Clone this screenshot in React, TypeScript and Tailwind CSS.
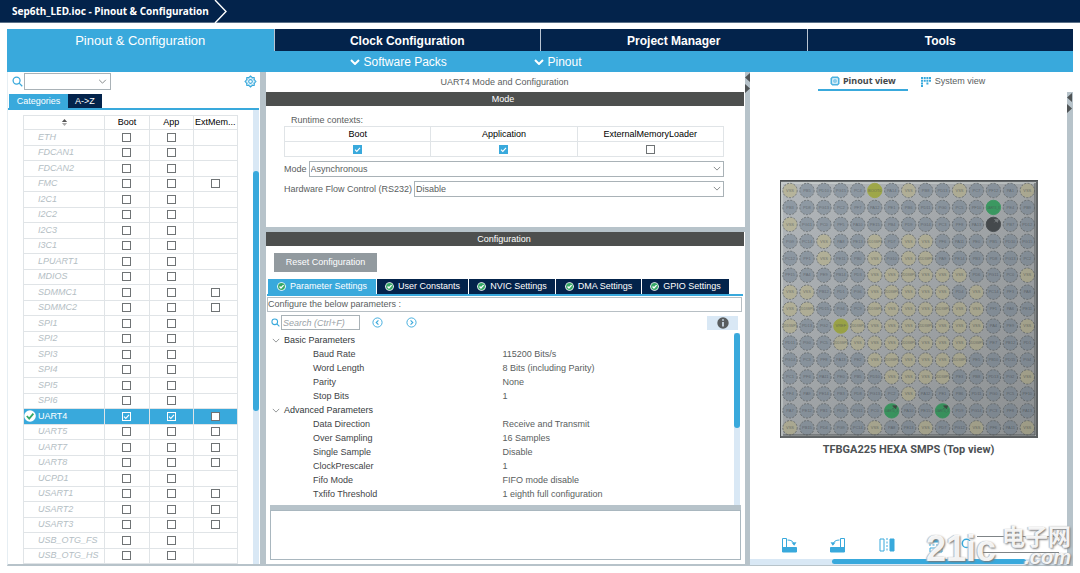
import { useState } from "react";
import clsx from "clsx";

type Row = { name: string; ext?: boolean; active?: boolean };

const PERIPHERALS: Row[] = [
  { name: "ETH" },
  { name: "FDCAN1" },
  { name: "FDCAN2" },
  { name: "FMC", ext: true },
  { name: "I2C1" },
  { name: "I2C2" },
  { name: "I2C3" },
  { name: "I3C1" },
  { name: "LPUART1" },
  { name: "MDIOS" },
  { name: "SDMMC1", ext: true },
  { name: "SDMMC2", ext: true },
  { name: "SPI1" },
  { name: "SPI2" },
  { name: "SPI3" },
  { name: "SPI4" },
  { name: "SPI5" },
  { name: "SPI6" },
  { name: "UART4", ext: true, active: true },
  { name: "UART5", ext: true },
  { name: "UART7", ext: true },
  { name: "UART8", ext: true },
  { name: "UCPD1" },
  { name: "USART1", ext: true },
  { name: "USART2", ext: true },
  { name: "USART3", ext: true },
  { name: "USB_OTG_FS" },
  { name: "USB_OTG_HS" },
];

const PARAMS = [
  {
    title: "Basic Parameters",
    items: [
      ["Baud Rate", "115200 Bits/s"],
      ["Word Length", "8 Bits (including Parity)"],
      ["Parity", "None"],
      ["Stop Bits", "1"],
    ],
  },
  {
    title: "Advanced Parameters",
    items: [
      ["Data Direction", "Receive and Transmit"],
      ["Over Sampling", "16 Samples"],
      ["Single Sample", "Disable"],
      ["ClockPrescaler", "1"],
      ["Fifo Mode", "FIFO mode disable"],
      ["Txfifo Threshold", "1 eighth full configuration"],
    ],
  },
];

const SETTINGS_TABS = [
  { label: "Parameter Settings", width: "w-[108px]" },
  { label: "User Constants", width: "w-[91px]" },
  { label: "NVIC Settings", width: "w-[86px]" },
  { label: "DMA Settings", width: "w-[85px]" },
  { label: "GPIO Settings", width: "w-[87px]" },
];

// g = free pin, y = power, L = fixed, G = assigned, K = reset
const BALLS = [
  "yggggLgyggygggy",
  "ggggggggggggGgg",
  "ygggggggggggKgg",
  "ggyggygyygggggg",
  "ggyggygyygggggg",
  "gggggyyyyyygggy",
  "yygggyyyyygyggg",
  "yygggyyyyyyyggg",
  "yggLyyyyyyyyggy",
  "gggyyyyyyyyyggg",
  "gggggyyyyyygggg",
  "ggggggyyyyggggy",
  "gggggggyggggggg",
  "ggggggGggGggggg",
  "yggggyggyggyggy",
];

const BALL_FILL: Record<string, string> = {
  g: "#909ba5",
  y: "#b7b59c",
  L: "#a3ac4a",
  G: "#3fa368",
  K: "#4a4f52",
};

function ballLabel(kind: string, r: number, c: number) {
  if (kind === "y") return (r + c) % 4 === 0 && r > 2 && r < 12 ? "VDDSMPS" : "VSS";
  if (kind === "L") return r === 0 ? "BOOT0" : "VREF";
  if (kind === "G") return "UART4_X";
  if (kind === "K") return "";
  return `P${"EBDGCFA"[(r + c) % 7]}${(r * 3 + c * 5) % 16}`;
}

function Chip() {
  return (
    <svg viewBox="0 0 258 258" className="w-[258px]" role="img" aria-label="TFBGA225 package">
      <defs>
        <linearGradient id="body" x1="0" y1="0" x2="1" y2="1">
          <stop offset="0" stopColor="#b3b8bc" />
          <stop offset="1" stopColor="#a4a8aa" />
        </linearGradient>
        <linearGradient id="shade" x1="0" y1="0" x2="1" y2="1">
          <stop offset="0" stopColor="#000" stopOpacity="0" />
          <stop offset="1" stopColor="#000" stopOpacity="0.15" />
        </linearGradient>
      </defs>
      <rect width="258" height="258" fill="#6a6e70" />
      <rect x="1" y="2" width="255" height="254" fill="#c5caca" />
      <rect x="3" y="4" width="252" height="251" fill="url(#body)" />
      {BALLS.map((row, r) =>
        row.split("").map((kind, c) => {
          const x = 10 + c * 16.95;
          const y = 10.5 + r * 16.95;
          return (
            <g key={`${r}-${c}`}>
              <circle
                cx={x}
                cy={y}
                r="7.2"
                fill={BALL_FILL[kind]}
                stroke={kind === "g" || kind === "y" ? "#6b7073" : BALL_FILL[kind]}
                strokeWidth="0.9"
                strokeDasharray={kind === "g" || kind === "y" ? "2 1.4" : undefined}
              />
              <text
                x={x}
                y={y + 1.2}
                textAnchor="middle"
                fontSize={ballLabel(kind, r, c).length > 5 ? "3" : "4"}
                fill="#50565b"
                opacity="0.65"
                fontFamily="Liberation Sans, sans-serif"
              >
                {ballLabel(kind, r, c)}
              </text>
              {(kind === "K" || (kind === "G" && r > 2)) && (
                <path
                  d={`M${x + 1} ${y - 2}l1.5 -1.5m-1.5 -1.5l3 3l1 -3z`}
                  fill={kind === "K" ? "#808588" : "#46504b"}
                  stroke={kind === "K" ? "#808588" : "#46504b"}
                  strokeWidth="0.8"
                />
              )}
            </g>
          );
        })
      )}
      <rect width="258" height="258" fill="url(#shade)" />
      <path d="M0 258V0H258" fill="none" stroke="#4d5153" strokeWidth="2" />
      <path d="M255 3V255H3" fill="none" stroke="#55595b" strokeWidth="1" />
    </svg>
  );
}

function Tick({ label, on = false, inverse = false }: { label: string; on?: boolean; inverse?: boolean }) {
  const [checked, setChecked] = useState(on);
  return (
    <span className="relative mx-auto block size-[9px]">
      <input
        type="checkbox"
        aria-label={label}
        checked={checked}
        onChange={(e) => setChecked(e.target.checked)}
        className={clsx(
          "block size-[9px] appearance-none border",
          checked && inverse && "border-white bg-[#39a9dc]",
          checked && !inverse && "border-[#39a9dc] bg-[#39a9dc]",
          !checked && "border-[#6f7375] bg-white"
        )}
      />
      {checked && (
        <svg viewBox="0 0 9 9" className="pointer-events-none absolute inset-0 size-[9px]">
          <path d="M2 4.6 3.8 6.4 7 2.8" fill="none" stroke="#fff" strokeWidth="1.1" />
        </svg>
      )}
    </span>
  );
}

function Chevron({ className }: { className: string }) {
  return (
    <svg viewBox="0 0 10 6" className={className} fill="none" stroke="currentColor">
      <path d="M1 1 5 5 9 1" />
    </svg>
  );
}

function Magnifier({ className }: { className: string }) {
  return (
    <svg viewBox="0 0 12 12" className={className} fill="none" stroke="#39a9dc" strokeWidth="1.4">
      <circle cx="5" cy="5" r="3.8" />
      <path d="m7.8 7.8 3.4 3.4" />
    </svg>
  );
}

function RowCheck() {
  return (
    <svg viewBox="0 0 12 12" className="-my-[2px] size-[12px]">
      <circle cx="6" cy="6" r="5.8" fill="#fff" />
      <path d="M2.8 6 5.2 8.6 9.4 3.6" fill="none" stroke="#35a866" strokeWidth="1.8" />
    </svg>
  );
}

function StatusDot() {
  return (
    <svg viewBox="0 0 12 12" className="size-[9px] shrink-0">
      <circle cx="6" cy="6" r="5.8" fill="#fff" />
      <circle cx="6" cy="6" r="4.6" fill="#35a866" />
      <path d="M3.4 6 5.3 8 8.8 4.2" fill="none" stroke="#fff" strokeWidth="1.8" />
    </svg>
  );
}

function SplitArrows() {
  return (
    <svg viewBox="0 0 5 22" className="h-[22px] w-[5px] shrink-0" fill="#505456">
      <path d="M5 1v9L0 5.5zM0 12v9l5-4.5z" />
    </svg>
  );
}

function TopTabs() {
  return (
    <nav className="grid grid-cols-4 bg-[#39a9dc]">
      <button className="row-span-2 flex h-[43px] justify-center pt-[4px] text-[13px] leading-[16px] text-white">
        Pinout &amp; Configuration
      </button>
      {["Clock Configuration", "Project Manager", "Tools"].map((t) => (
        <button
          key={t}
          className="h-[22px] border-l border-[#b9c4d2] bg-[#03234b] pt-px text-[12px] leading-[16px] font-bold text-white"
        >
          {t}
        </button>
      ))}
      <div className="col-span-3 flex h-[21px] items-center pl-[76px] text-[12px] leading-[14px] text-white">
        <button className="flex w-[184px] items-center gap-[4px]">
          <Chevron className="h-[6px] w-[10px] stroke-2" />
          Software Packs
        </button>
        <button className="flex items-center gap-[4px]">
          <Chevron className="h-[6px] w-[10px] stroke-2" />
          Pinout
        </button>
      </div>
    </nav>
  );
}

function PeripheralPanel() {
  return (
    <aside className="flex min-h-0 flex-col border-b-2 border-l border-b-[#b7c3ca] border-l-[#e6eef3]">
      <div className="flex h-[22px] items-start gap-px pt-px pr-[3px] pl-[4px]">
        <Magnifier className="mt-[3px] size-[11px]" />
        <div className="relative">
          <select
            aria-label="Find peripheral"
            className="block h-[17px] w-[87px] appearance-none border border-[#a9b2b7] bg-white"
          >
            <option></option>
          </select>
          <Chevron className="pointer-events-none absolute top-[6px] right-[4px] h-[5px] w-[9px] text-[#6f7375]" />
        </div>
        <button aria-label="Settings" className="mt-[2px] ml-auto">
          <svg viewBox="0 0 24 24" className="size-[13px]" fill="none" stroke="#39a9dc" strokeWidth="2">
            <circle cx="12" cy="12" r="3.4" />
            <path d="M12 1.800 14.800 4.600 18.800 4.800 19.200 9 22 12 19.200 15 18.800 19.200 14.800 19.400 12 22.200 9.200 19.400 5.200 19.200 4.800 15 2 12 4.800 9 5.200 4.800 9.200 4.600z" />
            <circle cx="12" cy="12" r="7" strokeWidth="1" />
          </svg>
        </button>
      </div>
      <div className="mr-px flex h-[16px] border-b-2 border-[#39a9dc] pl-px text-white">
        <button className="w-[59px] bg-[#39a9dc]">Categories</button>
        <button className="w-[34px] bg-[#03234b]">A-&gt;Z</button>
      </div>
      <div className="flex min-h-0 flex-1 justify-between pr-px pl-[15px]">
        <div className="mr-[15px] min-w-0 flex-1 pt-[5px]">
          <table className="h-full w-full table-fixed border-collapse text-left">
            <colgroup>
              <col className="w-[38%]" />
              <col />
              <col />
              <col />
            </colgroup>
            <thead className="text-center text-black">
              <tr className="h-[14px]">
                <th aria-label="Name" className="border border-[#e0e4e7] p-0">
                  <svg viewBox="0 0 8 8" className="mx-auto size-[7px]">
                    <path d="M4 0 7 3.4H1z" fill="#555" />
                    <path d="M4 8 7 4.6H1z" fill="#aaa" />
                  </svg>
                </th>
                <th className="border border-[#e0e4e7] p-0 font-normal">Boot</th>
                <th className="border border-[#e0e4e7] p-0 font-normal">App</th>
                <th className="border border-[#e0e4e7] p-0 font-normal">ExtMem...</th>
              </tr>
            </thead>
            <tbody>
              {PERIPHERALS.map((p) => (
                <tr key={p.name} className={p.active ? "bg-[#39a9dc] text-white" : "text-[#b4bec4] italic"}>
                  <td className="border border-[#e0e4e7] p-0">
                    <div className={clsx("flex items-center gap-[2px]", !p.active && "pl-[14px]")}>
                      {p.active && <RowCheck />}
                      {p.name}
                    </div>
                  </td>
                  <td className="border border-[#e0e4e7] p-0">
                    <Tick label={`${p.name} Boot`} on={p.active} inverse />
                  </td>
                  <td className="border border-[#e0e4e7] p-0">
                    <Tick label={`${p.name} App`} on={p.active} inverse />
                  </td>
                  <td className="border border-[#e0e4e7] p-0">{p.ext && <Tick label={`${p.name} ExtMem`} />}</td>
                </tr>
              ))}
            </tbody>
          </table>
        </div>
        <div className="w-[6px] bg-[#d9e8f5] pt-[61px]">
          <div className="h-[240px] rounded-full bg-[#39a9dc]" />
        </div>
      </div>
    </aside>
  );
}

function Field({ id, label, value }: { id: string; label: string; value: string }) {
  return (
    <div className="flex items-center gap-[2px]">
      <label htmlFor={id}>{label}</label>
      <div className="relative flex-1">
        <select
          id={id}
          className="block h-[16px] w-full appearance-none border border-[#a9b2b7] bg-white pl-px text-[#5a5e60]"
        >
          <option>{value}</option>
        </select>
        <Chevron className="pointer-events-none absolute top-[5px] right-[3px] h-[5px] w-[8px] text-[#6f7375]" />
      </div>
    </div>
  );
}

function ModePanel() {
  return (
    <section className="flex h-[155px] flex-col text-[#5a5e60]">
      <h1 className="mr-[2px] h-[20px] text-center leading-[20px]">UART4 Mode and Configuration</h1>
      <h2 className="mr-px h-[14px] bg-[#4d4f4e] pr-[4px] text-center leading-[14px] text-white">Mode</h2>
      <div className="flex flex-col gap-[4px] pt-[8px] pr-[21px] pl-[18px]">
        <div>
          <p className="pl-[7px] leading-[12px]">Runtime contexts:</p>
          <table className="w-full table-fixed border-collapse text-center">
            <thead className="text-black">
              <tr className="h-[15px]">
                {["Boot", "Application", "ExternalMemoryLoader"].map((h) => (
                  <th key={h} className="border border-[#e0e4e7] p-0 font-normal">
                    {h}
                  </th>
                ))}
              </tr>
            </thead>
            <tbody>
              <tr className="h-[15px]">
                <td className="border border-[#e0e4e7] p-0">
                  <Tick label="Boot" on />
                </td>
                <td className="border border-[#e0e4e7] p-0">
                  <Tick label="Application" on />
                </td>
                <td className="border border-[#e0e4e7] p-0">
                  <Tick label="ExternalMemoryLoader" />
                </td>
              </tr>
            </tbody>
          </table>
        </div>
        <Field id="mode" label="Mode" value="Asynchronous" />
        <Field id="flow" label="Hardware Flow Control (RS232)" value="Disable" />
      </div>
    </section>
  );
}

function RoundArrow({ flip = false }: { flip?: boolean }) {
  return (
    <svg viewBox="0 0 12 12" className="size-[11px]" fill="none" stroke="#39a9dc">
      <circle cx="6" cy="6" r="5" />
      <path d={flip ? "M5 3.6 7.4 6 5 8.4" : "M7 3.6 4.6 6 7 8.4"} strokeWidth="1.2" />
    </svg>
  );
}

function ConfigPanel() {
  const [tab, setTab] = useState("Parameter Settings");
  return (
    <section className="flex min-h-0 flex-1 flex-col border-b-2 border-[#b7c3ca] text-[#5a5e60]">
      <h2 className="mr-px h-[14px] bg-[#4d4f4e] pr-[2px] text-center leading-[14px] text-white">Configuration</h2>
      <div className="px-[8px] py-[7px]">
        <button className="block h-[19px] w-[103px] bg-[#929a9f] text-white">Reset Configuration</button>
      </div>
      <div className="mr-[2px] ml-px flex h-[17px] gap-px border-b-2 border-[#39a9dc] pl-px text-white">
        {SETTINGS_TABS.map((t) => (
          <button
            key={t.label}
            onClick={() => setTab(t.label)}
            className={clsx(
              "flex items-center justify-center gap-[4px] whitespace-nowrap",
              t.width,
              tab === t.label ? "bg-[#39a9dc]" : "bg-[#03234b]"
            )}
          >
            <StatusDot />
            {t.label}
          </button>
        ))}
      </div>
      <p className="mt-px mr-[3px] ml-px h-[15px] border border-[#b7bfc4] leading-[13px]">
        Configure the below parameters :
      </p>
      <div className="mt-[3px] flex h-[15px] items-center pr-[7px] pl-[5px]">
        <Magnifier className="size-[9px]" />
        <input
          aria-label="Search parameters"
          placeholder="Search (Ctrl+F)"
          className="ml-px h-[15px] w-[79px] border border-[#a9b2b7] pl-px italic placeholder:text-[#9aa2a7]"
        />
        <button aria-label="Previous" className="ml-[12px]">
          <RoundArrow />
        </button>
        <button aria-label="Next" className="ml-[23px]">
          <RoundArrow flip />
        </button>
        <button aria-label="Information" className="ml-auto grid h-[14px] w-[31px] place-items-center bg-[#d9e8f5]">
          <svg viewBox="0 0 12 12" className="size-[12px]">
            <circle cx="6" cy="6" r="5.7" fill="#595d5f" />
            <path d="M6 2.2v1.6M6 5v4.6" stroke="#d9e8f5" strokeWidth="1.6" />
          </svg>
        </button>
      </div>
      <div className="mt-[3px] flex min-h-0 flex-1 pr-[5px] pl-[6px]">
        <div className="flex-1 overflow-hidden">
          {PARAMS.map((g) => (
            <div key={g.title}>
              <button className="flex h-[14px] items-center gap-[4px] text-[#33383b]">
                <Chevron className="h-[5px] w-[8px] text-[#7b8082]" />
                {g.title}
              </button>
              <dl>
                {g.items.map(([k, v]) => (
                  <div key={k} className="flex h-[14px] items-center pl-[41px]">
                    <dt className="w-[45%] text-[#3f4447]">{k}</dt>
                    <dd>{v}</dd>
                  </div>
                ))}
              </dl>
            </div>
          ))}
        </div>
        <div className="w-[6px] bg-[#d9e8f5]">
          <div className="h-[95px] rounded-full bg-[#39a9dc]" />
        </div>
      </div>
      <div className="mx-[4px] h-[5px] bg-[#b7c3ca]" />
      <div className="mx-[4px] mb-[4px] h-[50px] border border-[#a9b7bf]" />
    </section>
  );
}

function PinoutPanel() {
  return (
    <section className="flex min-h-0 min-w-0 flex-col">
      <div className="flex h-[20px] items-start pl-[21%]">
        <button className="flex h-[19px] w-[90px] items-center justify-center gap-[3px] border-b-2 border-[#39a9dc] font-['Noto_Sans',sans-serif] font-bold text-[#44484a]">
          <svg viewBox="0 0 10 10" className="size-[10px]" fill="none" stroke="#39a9dc">
            <rect x="1.7" y="1.7" width="6.6" height="6.6" strokeWidth="1.1" />
            <rect x="3.9" y="3.9" width="2.2" height="2.2" strokeWidth="0.9" />
            <path
              d="M3 0v1.5M5 0v1.5M7 0v1.5M3 8.5V10M5 8.5V10M7 8.5V10M0 3h1.5M0 5h1.5M0 7h1.5M8.5 3H10M8.5 5H10M8.5 7H10"
              strokeWidth="0.9"
            />
          </svg>
          Pinout view
        </button>
        <button className="ml-[13px] flex h-[19px] items-center gap-[4px] text-[#5a5e60]">
          <svg viewBox="0 0 10 10" className="size-[10px]" fill="#39a9dc">
            <path d="M0 0h2v2H0zM2.700 0h2v2h-2zM5.400 0h2v2h-2zM8 0h2v2H8zM0 2.700h2v2H0zM2.700 2.700h2v2h-2zM5.400 2.700h2v2h-2zM8 2.700h2v2H8zM0 5.400h2v2H0zM5.400 5.400h2v2h-2zM0 8h2v2H0z" />
          </svg>
          System view
        </button>
      </div>
      <div className="flex min-h-0 flex-1">
        <div className="relative flex min-w-0 flex-1 flex-col">
          <figure className="flex flex-1 flex-col items-center justify-center pt-[8px]">
            <Chip />
            <figcaption className="mt-[5px] font-['Roboto',sans-serif] text-[11px] leading-[14px] font-bold text-[#4d5153]">
              TFBGA225 HEXA SMPS (Top view)
            </figcaption>
          </figure>
          <div className="mb-[6px] flex h-[17px] items-center gap-[33px] pl-[31px]">
            <button aria-label="Rotate clockwise">
              <svg viewBox="0 0 16 16" className="size-[16px]" fill="none" stroke="#39a9dc">
                <path d="M1.500 14V1.500h4V10" />
                <path d="M1.500 10.500h14V15h-14z" fill="#39a9dc" />
                <path d="M6.500 3c4 0 6 1.600 6.500 4.600" />
                <path d="m10.500 5.500 2.700 3.200 2.300-3.400z" fill="#39a9dc" stroke="none" />
              </svg>
            </button>
            <button aria-label="Rotate counter-clockwise">
              <svg viewBox="0 0 16 16" className="size-[16px]" fill="none" stroke="#39a9dc">
                <path d="M14.500 14V1.500h-4V10" />
                <path d="M.500 10.500h14V15h-14z" fill="#39a9dc" />
                <path d="M9.500 3c-4 0-6 1.600-6.500 4.600" />
                <path d="M5.500 5.500 2.800 8.700.500 5.300z" fill="#39a9dc" stroke="none" />
              </svg>
            </button>
            <button aria-label="Flip horizontally">
              <svg viewBox="0 0 16 16" className="size-[16px]" fill="none" stroke="#39a9dc">
                <path d="M1 2h4v12H1z" />
                <path d="M8 1v14" strokeDasharray="2 1.500" />
                <path d="M11 2h4v12h-4z" fill="#39a9dc" />
              </svg>
            </button>
            <button aria-label="Flip vertically">
              <svg viewBox="0 0 16 16" className="size-[16px]" fill="none" stroke="#39a9dc">
                <path d="M2 1h12v4H2z" fill="#39a9dc" />
                <path d="M1 8h14" strokeDasharray="2 1.500" />
                <path d="M2 11h12v4H2z" />
              </svg>
            </button>
            <label htmlFor="pin-search" className="-ml-[16px] flex">
              <Magnifier className="size-[13px]" />
            </label>
            <input
              id="pin-search"
              aria-label="Find pin"
              className="-ml-[30px] h-[17px] w-[82px] shrink-0 border-y border-[#7f8487]"
            />
          </div>
          <div className="h-[7px] border-b border-[#b7c3ca] bg-[#d9e8f5]">
            <div className="ml-[26%] h-[5px] w-[61%] rounded-full bg-[#39a9dc]" />
          </div>
          <div
            aria-hidden
            className="pointer-events-none absolute -right-[4px] bottom-0 flex h-[40px] items-end gap-[6px] font-bold whitespace-nowrap text-white/90 [text-shadow:1px_1px_2px_#777,-1px_0_1px_#bbb]"
          >
            <span className="text-[36px] leading-[34px]">21ic</span>
            <span className="flex flex-col font-['Liberation_Sans','Noto_Sans_CJK_SC',sans-serif]">
              <span className="text-[23px] leading-[22px]">电子网</span>
              <span className="text-right text-[20px] leading-[18px] italic">.com</span>
            </span>
          </div>
        </div>
        <div className="w-[6px] border-b-2 border-[#b7c3ca] bg-[#b7c3ca]">
          <SplitArrows />
        </div>
      </div>
    </section>
  );
}

export default function App() {
  return (
    <div className="flex h-screen flex-col overflow-hidden bg-white pb-[7px] font-['Liberation_Sans',Arial,sans-serif] text-[9px] leading-[11px]">
      <header className="flex h-[23px] shrink-0 items-center gap-[5px] border-b border-[#5a7088] bg-[#03234b] pl-[12px] font-['Noto_Sans',sans-serif] text-[10px] font-bold text-white">
        Sep6th_LED.ioc - Pinout &amp; Configuration
        <svg viewBox="0 0 13 23" className="h-[23px] w-[13px]" fill="none" stroke="#fff" strokeWidth="1.4">
          <path d="M1 0 12 11.5 1 23" />
        </svg>
      </header>
      <main className="flex min-h-0 flex-1 flex-col px-[7px] pt-[6px]">
        <TopTabs />
        <div className="grid min-h-0 flex-1 grid-cols-[253fr_6px_479fr_5px_323fr] grid-rows-[minmax(0,1fr)]">
          <PeripheralPanel />
          <div className="bg-[#b7c3ca]" />
          <div className="flex min-h-0 min-w-0 flex-col">
            <ModePanel />
            <div className="h-[5px] shrink-0 bg-[#b7c3ca]" />
            <ConfigPanel />
          </div>
          <div className="bg-[#b7c3ca]">
            <SplitArrows />
          </div>
          <PinoutPanel />
        </div>
      </main>
    </div>
  );
}
